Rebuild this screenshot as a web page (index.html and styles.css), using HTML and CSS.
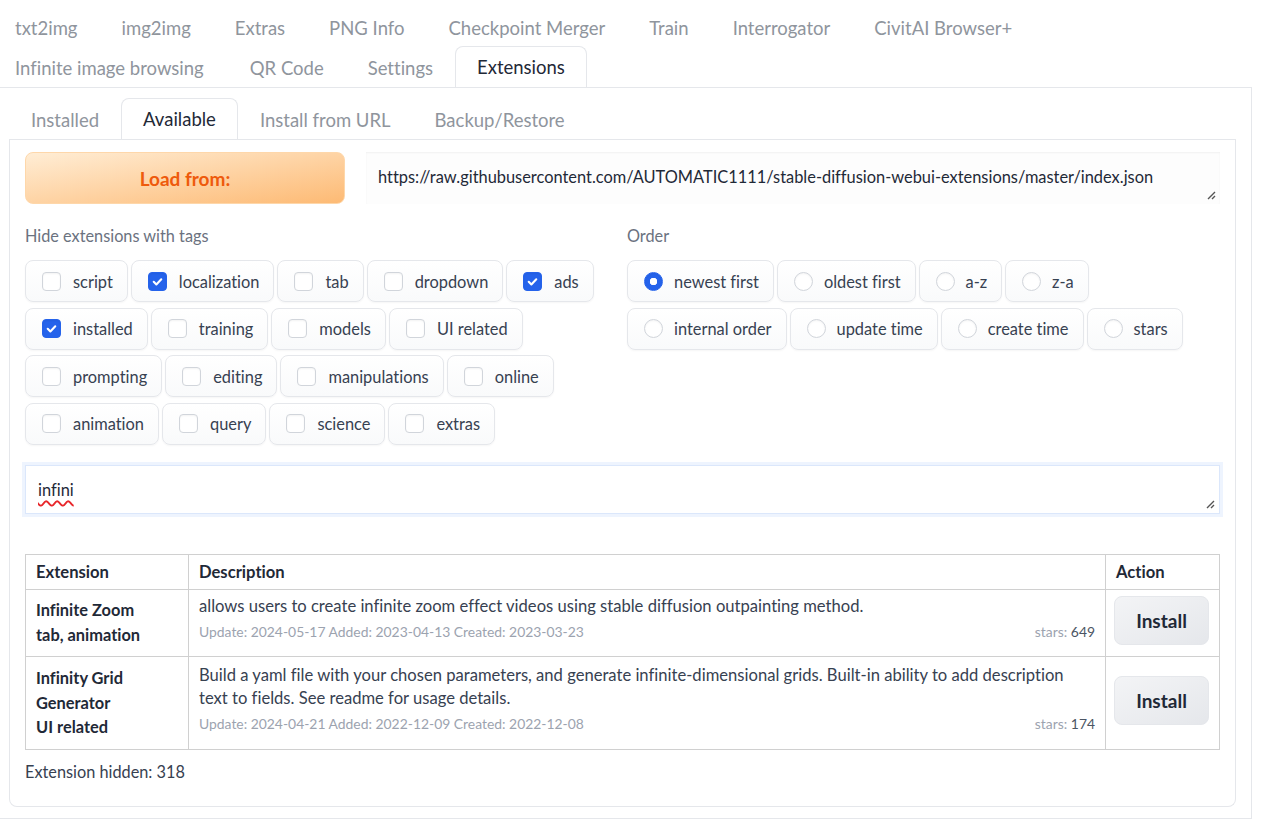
FILE: index.html
```html
<!DOCTYPE html>
<html lang="en">
<head>
<meta charset="utf-8">
<title>Extensions</title>
<link rel="stylesheet" href="styles.css">
</head>
<body>
<div class="app">
  <nav class="tabs top-tabs">
    <div class="tab-row">
      <button class="tab">txt2img</button>
      <button class="tab">img2img</button>
      <button class="tab">Extras</button>
      <button class="tab">PNG Info</button>
      <button class="tab">Checkpoint Merger</button>
      <button class="tab">Train</button>
      <button class="tab">Interrogator</button>
      <button class="tab">CivitAI Browser+</button>
    </div>
    <div class="tab-row">
      <button class="tab">Infinite image browsing</button>
      <button class="tab">QR Code</button>
      <button class="tab">Settings</button>
      <button class="tab selected">Extensions</button>
    </div>
  </nav>

  <div class="outer-panel">
    <nav class="tabs sub-tabs">
      <div class="tab-row">
        <button class="tab">Installed</button>
        <button class="tab selected">Available</button>
        <button class="tab">Install from URL</button>
        <button class="tab">Backup/Restore</button>
      </div>
    </nav>

    <div class="inner-panel">
      <div class="load-row">
        <button class="btn-primary">Load from:</button>
        <div class="textbox url-box">
          <span>https://raw.githubusercontent.com/AUTOMATIC1111/stable-diffusion-webui-extensions/master/index.json</span>
          <svg class="resize" width="10" height="10" viewBox="0 0 10 10"><path d="M9 2L2 9M9 6L6 9" stroke="#555" stroke-width="1.4" fill="none"/></svg>
        </div>
      </div>

      <div class="filters">
        <div class="filter-group tags">
          <div class="group-label">Hide extensions with tags</div>
          <div class="chips">
            <label class="chip"><span class="box"></span>script</label>
            <label class="chip"><span class="box checked"><svg viewBox="0 0 18 18"><path d="M5 9.3l2.8 2.8L13 6.6" stroke="#fff" stroke-width="2.2" fill="none" stroke-linecap="round" stroke-linejoin="round"/></svg></span>localization</label>
            <label class="chip"><span class="box"></span>tab</label>
            <label class="chip"><span class="box"></span>dropdown</label>
            <label class="chip"><span class="box checked"><svg viewBox="0 0 18 18"><path d="M5 9.3l2.8 2.8L13 6.6" stroke="#fff" stroke-width="2.2" fill="none" stroke-linecap="round" stroke-linejoin="round"/></svg></span>ads</label>
            <label class="chip"><span class="box checked"><svg viewBox="0 0 18 18"><path d="M5 9.3l2.8 2.8L13 6.6" stroke="#fff" stroke-width="2.2" fill="none" stroke-linecap="round" stroke-linejoin="round"/></svg></span>installed</label>
            <label class="chip"><span class="box"></span>training</label>
            <label class="chip"><span class="box"></span>models</label>
            <label class="chip"><span class="box"></span>UI related</label>
            <label class="chip"><span class="box"></span>prompting</label>
            <label class="chip"><span class="box"></span>editing</label>
            <label class="chip"><span class="box"></span>manipulations</label>
            <label class="chip"><span class="box"></span>online</label>
            <label class="chip"><span class="box"></span>animation</label>
            <label class="chip"><span class="box"></span>query</label>
            <label class="chip"><span class="box"></span>science</label>
            <label class="chip"><span class="box"></span>extras</label>
          </div>
        </div>
        <div class="filter-group order">
          <div class="group-label">Order</div>
          <div class="chips">
            <label class="chip"><span class="radio on"></span>newest first</label>
            <label class="chip"><span class="radio"></span>oldest first</label>
            <label class="chip"><span class="radio"></span>a-z</label>
            <label class="chip"><span class="radio"></span>z-a</label>
            <label class="chip"><span class="radio"></span>internal order</label>
            <label class="chip"><span class="radio"></span>update time</label>
            <label class="chip"><span class="radio"></span>create time</label>
            <label class="chip"><span class="radio"></span>stars</label>
          </div>
        </div>
      </div>

      <div class="textbox search-box">
        <span class="typo">infini</span>
        <svg class="resize" width="10" height="10" viewBox="0 0 10 10"><path d="M9 2L2 9M9 6L6 9" stroke="#555" stroke-width="1.4" fill="none"/></svg>
      </div>

      <table class="ext-table">
        <thead>
          <tr class="head-row"><th class="col-ext">Extension</th><th class="col-desc">Description</th><th class="col-act">Action</th></tr>
        </thead>
        <tbody>
          <tr class="row-1">
            <td class="ext-name">Infinite Zoom<br>tab, animation</td>
            <td class="desc">
              <div class="desc-text">allows users to create infinite zoom effect videos using stable diffusion outpainting method.</div>
              <div class="meta"><span>Update: 2024-05-17 Added: 2023-04-13 Created: 2023-03-23</span><span>stars: <b>649</b></span></div>
            </td>
            <td class="action"><button class="btn-secondary">Install</button></td>
          </tr>
          <tr class="row-2">
            <td class="ext-name">Infinity Grid<br>Generator<br>UI related</td>
            <td class="desc">
              <div class="desc-text">Build a yaml file with your chosen parameters, and generate infinite-dimensional grids. Built-in ability to add description text to fields. See readme for usage details.</div>
              <div class="meta"><span>Update: 2024-04-21 Added: 2022-12-09 Created: 2022-12-08</span><span>stars: <b>174</b></span></div>
            </td>
            <td class="action"><button class="btn-secondary">Install</button></td>
          </tr>
        </tbody>
      </table>

      <div class="hidden-count">Extension hidden: 318</div>
    </div>
  </div>
</div>
</body>
</html>
```

FILE: styles.css
```css
* { box-sizing: border-box; }

html, body {
  margin: 0;
  padding: 0;
  background: #ffffff;
  overflow: hidden;
}

body {
  font-family: Lato, "Liberation Sans", sans-serif;
  font-variant-ligatures: none;
  color: #374151;
  font-size: 16.6px;
}

.app {
  margin-left: -7px;
  width: 1259px;
  padding-top: 7px;
}

/* ---------- tabs ---------- */
.tabs {
  border-bottom: 1px solid #e5e7eb;
}

.tab-row {
  display: flex;
}

.tab {
  height: 40px;
  padding: 0 21px;
  border: 1px solid transparent;
  border-bottom: none;
  background: transparent;
  font-family: inherit;
  font-variant-ligatures: none;
  font-size: 18.5px;
  color: #8f959d;
  border-radius: 8px 8px 0 0;
  cursor: pointer;
  white-space: nowrap;
}

.top-tabs .tab-row + .tab-row .tab:first-child {
  padding-right: 23px;
}

.tab.selected {
  color: #1f2937;
  background: #ffffff;
  border-color: #e5e7eb;
  height: 41px;
  margin-top: -1px;
  margin-bottom: -1px;
  position: relative;
}

/* ---------- panels ---------- */
.outer-panel {
  border: 1px solid #e5e7eb;
  border-top: none;
  padding: 11px 15px 11px 15px;
  height: 731px;
}

.inner-panel {
  border: 1px solid #e5e7eb;
  border-top: none;
  border-radius: 0 0 8px 8px;
  padding: 12px 15px 0 15px;
  height: 667px;
}

/* ---------- load row ---------- */
.load-row {
  display: grid;
  grid-template-columns: 320px 1fr;
  column-gap: 21px;
}

.btn-primary {
  height: 52px;
  border: 1px solid #fed7aa;
  border-radius: 8px;
  background: linear-gradient(to bottom right, #ffedd5, #fdba74);
  color: #ee5a0c;
  font-family: inherit;
  font-weight: 700;
  font-size: 19px;
}

.textbox {
  position: relative;
  background: #fdfdfd;
  box-shadow: inset 0 1px 2px rgba(0, 0, 0, 0.05);
  font-size: 16.4px;
  color: #1f2937;
  display: flex;
  align-items: center;
  padding: 0 12px;
}

.url-box {
  height: 52px;
  padding-bottom: 3px;
}

.resize {
  position: absolute;
  right: 4px;
  bottom: 4px;
}

/* ---------- filters ---------- */
.filters {
  display: grid;
  grid-template-columns: 581px 1fr;
  column-gap: 21px;
  margin-top: 21px;
}

.group-label {
  font-size: 16.3px;
  color: #6b7280;
  line-height: 22px;
  margin-bottom: 13px;
}

.chips {
  display: flex;
  flex-wrap: wrap;
  column-gap: 3px;
  row-gap: 5.6px;
}

.chip {
  display: flex;
  align-items: center;
  height: 42px;
  padding: 0 14px 0 16px;
  border: 1px solid #e5e7eb;
  border-radius: 8px;
  background: linear-gradient(to bottom, #ffffff, #f9fafb);
  box-shadow: 0 1px 2px rgba(0, 0, 0, 0.04);
  font-size: 16.4px;
  color: #374151;
  white-space: nowrap;
}

.box {
  width: 19px;
  height: 19px;
  border: 1px solid #d1d5db;
  border-radius: 4px;
  background: #ffffff;
  box-shadow: inset 0 1px 2px rgba(0, 0, 0, 0.05);
  margin-right: 12px;
  flex: none;
  display: flex;
}

.box.checked {
  background: #2563eb;
  border-color: #2563eb;
}

.box svg {
  width: 100%;
  height: 100%;
}

.radio {
  width: 19px;
  height: 19px;
  border: 1px solid #d1d5db;
  border-radius: 50%;
  background: #ffffff;
  box-shadow: inset 0 1px 2px rgba(0, 0, 0, 0.05);
  margin-right: 11px;
  flex: none;
}

.radio.on {
  background: radial-gradient(circle, #ffffff 0 3.5px, #2563eb 4px);
  border-color: #2563eb;
}

/* ---------- search ---------- */
.search-box {
  margin-top: 20px;
  height: 49px;
  background: #ffffff;
  border: 1px solid #dbe7fb;
  box-shadow: 0 0 0 3px #eef4fe;
  padding-left: 12px;
}

.typo {
  text-decoration: underline wavy #e8262a;
  text-decoration-thickness: 1.5px;
  text-underline-offset: 4px;
}

/* ---------- table ---------- */
.ext-table {
  margin-top: 40px;
  width: 100%;
  border-collapse: collapse;
  table-layout: fixed;
}

.ext-table th,
.ext-table td {
  border: 1px solid #d0d0d0;
  padding: 0 10px;
  vertical-align: middle;
  text-align: left;
}

.ext-table th {
  font-weight: 700;
  color: #1f2937;
  font-size: 16.6px;
}

.col-ext { width: 163px; }
.col-act { width: 114px; }

.head-row { height: 35px; }
.row-1 { height: 67px; }
.row-2 { height: 93px; }

.ext-name {
  font-weight: 700;
  color: #1f2937;
  line-height: 24.5px;
  font-size: 16.4px;
}

.ext-table td.desc {
  padding: 4px 10px 11px;
}

.desc-text {
  line-height: 23px;
  color: #374151;
}

.meta {
  display: flex;
  justify-content: space-between;
  font-size: 13.9px;
  line-height: 22px;
  margin-top: 3px;
  color: #9ca3af;
}

.meta b {
  font-weight: 400;
  color: #4b5563;
}

.ext-table td.action {
  padding: 4px 10px 8px 8px;
}

.btn-secondary {
  width: 95px;
  height: 49px;
  border: 1px solid #e5e7eb;
  border-radius: 8px;
  background: linear-gradient(to bottom right, #f3f4f6, #e5e7eb);
  color: #1f2937;
  font-family: inherit;
  font-weight: 700;
  font-size: 19px;
}

.hidden-count {
  margin-top: 11px;
  line-height: 22px;
  font-size: 16.3px;
  color: #374151;
}
```
